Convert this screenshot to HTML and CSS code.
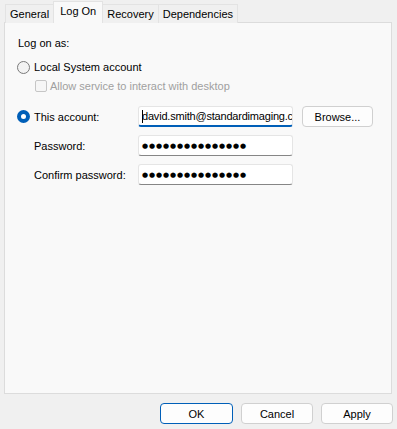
FILE: index.html
```html
<!DOCTYPE html>
<html lang="en">
<head>
  <meta charset="UTF-8" />
  <title>Service Properties - Log On</title>
  <link rel="stylesheet" href="styles.css">
</head>
<body>
  <div class="dialog">
    <div class="tabs">
      <div class="tab">General</div>
      <div class="tab active">Log On</div>
      <div class="tab">Recovery</div>
      <div class="tab">Dependencies</div>
    </div>

    <div class="panel">
      <div class="caption">Log on as:</div>

      <div class="option">
        <span class="radio"></span>
        <span>Local System account</span>
      </div>
      <div class="check disabled">
        <span class="box"></span>
        <span>Allow service to interact with desktop</span>
      </div>

      <div class="account-grid">
        <div class="option">
          <span class="radio checked"></span>
          <span>This account:</span>
        </div>
        <div class="field focused"><span class="caret"></span>david.smith@standardimaging.c</div>
        <button class="btn">Browse...</button>

        <div class="label">Password:</div>
        <div class="field dots">●●●●●●●●●●●●●●●</div>
        <div></div>

        <div class="label">Confirm password:</div>
        <div class="field dots">●●●●●●●●●●●●●●●</div>
        <div></div>
      </div>
    </div>

    <div class="footer">
      <button class="btn default">OK</button>
      <button class="btn">Cancel</button>
      <button class="btn">Apply</button>
    </div>
  </div>
</body>
</html>
```

FILE: styles.css
```css
:root {
  --window: #f0f0f0;
  --panel: #f9f9f9;
  --line: #dcdcdc;
  --accent: #005fb8;
  --muted: #a0a0a0;
}

body {
  margin: 0;
  background: var(--window);
  font-family: 'Liberation Sans', Arial, sans-serif;
  font-size: 11px;
  color: #000;
}

.dialog {
  width: 397px;
  height: 429px;
}

/* tab strip */
.tabs {
  display: flex;
  align-items: flex-end;
  height: 23px;
  padding-left: 5px;
  margin-bottom: -1px;
  position: relative;
  z-index: 1;
}

.tab {
  height: 18px;
  line-height: 18px;
  padding: 0 4px;
  border: 1px solid #e3e3e3;
  border-bottom: none;
  border-left: none;
  background: #f0f0f0;
}

.tab:first-child {
  border-left: 1px solid #e3e3e3;
}

.tab.active {
  height: 21px;
  line-height: 19px;
  padding: 0 6px;
  margin-left: -1px;
  border-left: 1px solid #e3e3e3;
  background: var(--panel);
}

/* page */
.panel {
  box-sizing: border-box;
  height: 372px;
  margin: 0 5px 0 4px;
  padding: 13px 12px 0 12px;
  background: var(--panel);
  border: 1px solid var(--line);
}

.caption {
  height: 14px;
  line-height: 14px;
  padding-left: 1px;
}

.option, .check {
  display: flex;
  align-items: center;
  gap: 4px;
  height: 14px;
  line-height: 14px;
}

.option { margin-top: 10px; }

.check {
  margin-top: 5px;
  padding-left: 18px;
  gap: 3px;
}

.disabled { color: var(--muted); }

.radio {
  box-sizing: border-box;
  width: 13px;
  height: 13px;
  border: 1px solid #7a7a7a;
  border-radius: 50%;
  background: #f3f3f3;
  flex: none;
}

.radio.checked {
  border: 4px solid var(--accent);
  background: #fff;
}

.box {
  box-sizing: border-box;
  width: 12px;
  height: 12px;
  border: 1px solid #c6c6c6;
  border-radius: 2px;
  background: #f6f6f6;
  flex: none;
}

/* account fields */
.account-grid {
  display: grid;
  grid-template-columns: 112px 155px 71px;
  grid-auto-rows: 21px;
  column-gap: 9px;
  row-gap: 8px;
  margin-top: 13px;
  align-items: center;
}

.account-grid .option { margin-top: 0; }

.label { padding-left: 17px; }

.field {
  box-sizing: border-box;
  height: 21px;
  line-height: 20px;
  padding: 0 3px;
  background: #fff;
  border: 1px solid #e5e5e5;
  border-bottom-color: #868686;
  border-radius: 3px;
  white-space: nowrap;
  overflow: hidden;
}

.field.focused {
  border-bottom: 2px solid var(--accent);
  line-height: 19px;
  letter-spacing: -0.2px;
}

.caret {
  display: inline-block;
  width: 1px;
  height: 13px;
  margin-right: -1px;
  vertical-align: -3px;
  background: #000;
}

.dots {
  font-family: 'DejaVu Sans', sans-serif;
  font-size: 7px;
  letter-spacing: 0.9px;
}

.btn {
  box-sizing: border-box;
  height: 21px;
  padding: 0;
  font: inherit;
  color: #000;
  background: #fdfdfd;
  border: 1px solid #d0d0d0;
  border-radius: 4px;
}

.btn.default {
  border-color: var(--accent);
}

.footer {
  display: flex;
  justify-content: flex-end;
  gap: 8px;
  margin-top: 9px;
  padding-right: 4px;
}

.footer .btn { width: 72px; }
.footer .btn.default { width: 73px; }
```
